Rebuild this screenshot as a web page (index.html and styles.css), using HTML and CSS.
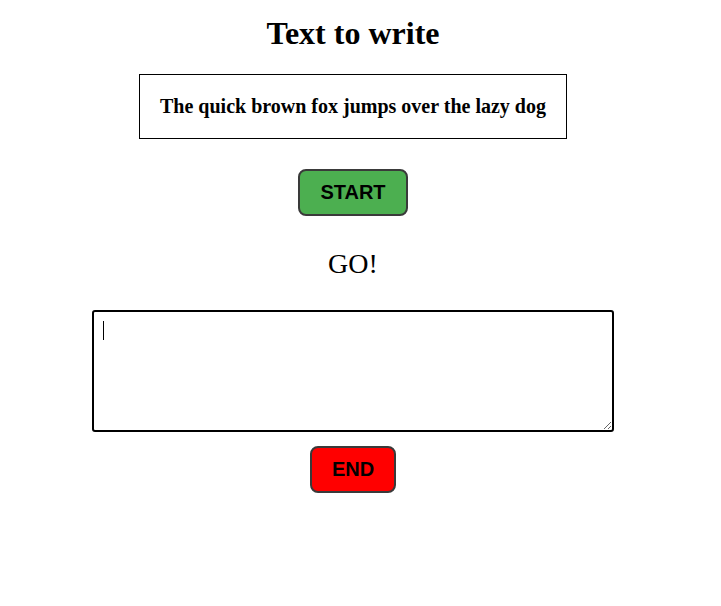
FILE: index.html
```html
<!DOCTYPE html>
<html>
<head>
<meta charset="utf-8">
<link rel="stylesheet" href="styles.css">
</head>
<body>
<main class="page">
  <h1 class="title">Text to write</h1>
  <div class="sample">The quick brown fox jumps over the lazy dog</div>
  <button class="btn btn-start">START</button>
  <p class="status">GO!</p>
  <div class="input-wrap">
    <textarea class="input" autofocus></textarea>
    <span class="caret"></span>
  </div>
  <button class="btn btn-end">END</button>
</main>
</body>
</html>
```
FILE: styles.css
```css
html, body {
  margin: 0;
  padding: 0;
  background: #fff;
}
body {
  font-family: "Liberation Serif", "Times New Roman", serif;
  color: #000;
}
.page {
  width: 706px;
  display: flex;
  flex-direction: column;
  align-items: center;
  padding-top: 15px;
}
.title {
  font-size: 32px;
  font-weight: bold;
  line-height: 37px;
  margin: 0 0 22px;
}
.sample {
  border: 1px solid #000;
  padding: 20px 20px;
  font-size: 20px;
  font-weight: bold;
  line-height: 23px;
  margin-bottom: 30px;
}
.btn {
  font-family: "Liberation Sans", Arial, sans-serif;
  font-size: 20px;
  font-weight: bold;
  line-height: 23px;
  padding: 10px 20px;
  border: 2px solid #3a3a3a;
  border-radius: 8px;
  color: #000;
  cursor: pointer;
}
.btn-start {
  background: #4caf50;
  margin-bottom: 32px;
}
.btn-end {
  background: #ff0000;
}
.status {
  font-size: 28px;
  line-height: 32px;
  margin: 0 0 30px;
}
.input-wrap {
  position: relative;
  margin: 0 0 14px;
}
.input {
  display: block;
  box-sizing: border-box;
  width: 522px;
  height: 122px;
  border: 2px solid #000;
  border-radius: 3px;
  padding: 8px 9px;
  font-family: "Liberation Sans", Arial, sans-serif;
  font-size: 17px;
  outline: none;
  caret-color: transparent;
  margin: 0;
}
.caret {
  position: absolute;
  left: 11px;
  top: 11px;
  width: 1px;
  height: 19px;
  background: #000;
  pointer-events: none;
}
```
